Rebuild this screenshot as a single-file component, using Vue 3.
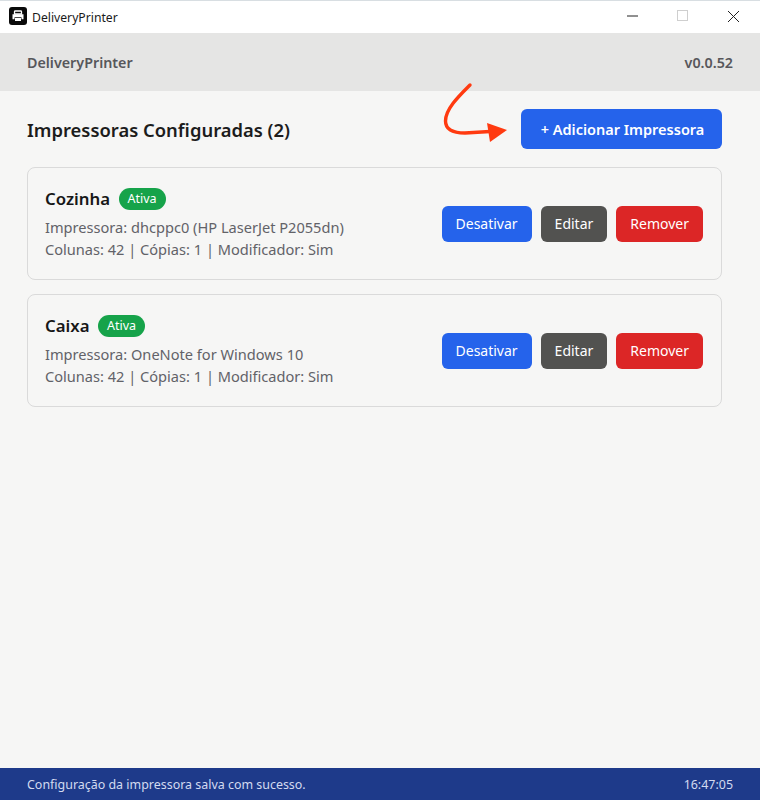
<script setup>
const printers = [
  { name: 'Cozinha', device: 'dhcppc0 (HP LaserJet P2055dn)' },
  { name: 'Caixa', device: 'OneNote for Windows 10' }
]
</script>

<template>
  <div class="window">
    <div class="titlebar">
      <div class="app-icon">
        <svg width="18" height="18" viewBox="0 0 18 18">
          <rect x="0" y="0" width="18" height="18" rx="3" fill="#0a0a0a" />
          <path d="M5.500 7V4.800q0-.8.8-.8h5.400q.8 0 .8.8V7z" fill="none" stroke="#fff" stroke-width="1.300" />
          <path d="M3.500 7.200h11v5h-2V10.300h-7v1.900h-2z" fill="#fff" />
          <path d="M6 11h6v3H6z" fill="#fff" />
        </svg>
      </div>
      <span class="app-title">DeliveryPrinter</span>
      <div class="controls">
        <svg width="12" height="12" viewBox="0 0 12 12"><path d="M0 6h11" stroke="#222" stroke-width="1" /></svg>
        <svg width="12" height="12" viewBox="0 0 12 12"><rect x="0.500" y="0.500" width="10" height="10" fill="none" stroke="#cfcfcf" /></svg>
        <svg width="13" height="13" viewBox="0 0 13 13"><path d="M1 1l11 11M12 1L1 12" stroke="#222" stroke-width="1" /></svg>
      </div>
    </div>
    <header class="header">
      <span>DeliveryPrinter</span>
      <span>v0.0.52</span>
    </header>
    <main class="main">
      <div class="section-head">
        <h2>Impressoras Configuradas (2)</h2>
        <div class="add-wrap">
          <svg class="arrow" width="70" height="66" viewBox="0 0 70 66">
            <path d="M27 3C16 14 2.500 27 2.500 39C2.500 48 10 51 22 51L47 49.500" fill="none" stroke="#ff3a10" stroke-width="3.400" stroke-linecap="round" />
            <path d="M44 41l20 7-17 12z" fill="#ff3a10" />
          </svg>
          <button class="btn-add">+ Adicionar Impressora</button>
        </div>
      </div>
      <div class="list">
        <article v-for="p in printers" :key="p.name" class="card">
          <div class="info">
            <div class="name-row">
              <span class="name">{{ p.name }}</span>
              <span class="badge">Ativa</span>
            </div>
            <div class="meta">Impressora: {{ p.device }}</div>
            <div class="meta">Colunas: 42 | Cópias: 1 | Modificador: Sim</div>
          </div>
          <div class="actions">
            <button class="btn blue">Desativar</button>
            <button class="btn gray">Editar</button>
            <button class="btn red">Remover</button>
          </div>
        </article>
      </div>
    </main>
    <footer class="footer">
      <span>Configuração da impressora salva com sucesso.</span>
      <span>16:47:05</span>
    </footer>
  </div>
</template>

<style>
html, body { margin: 0; background: #f6f6f5; }
</style>

<style scoped>
.window {
  width: 760px;
  height: 800px;
  display: flex;
  flex-direction: column;
  font-family: "Noto Sans", "Open Sans", sans-serif;
  background: #f6f6f5;
  overflow: hidden;
}
.titlebar {
  height: 33px;
  box-sizing: border-box;
  border-top: 1px solid #d8dee2;
  background: #fff;
  display: flex;
  align-items: center;
  padding-left: 9px;
  flex: none;
}
.app-icon { width: 18px; height: 18px; display: flex; margin-bottom: 2px; }
.app-title { margin-left: 5px; font-size: 12.200px; color: #1a1a1a; }
.controls {
  margin-left: auto;
  display: flex;
  align-items: center;
  gap: 38px;
  padding-right: 20px;
  padding-bottom: 2px;
}
.header {
  height: 58px;
  flex: none;
  background: #e5e5e4;
  display: flex;
  align-items: center;
  justify-content: space-between;
  padding: 0 27px;
  font-size: 14.300px;
  font-weight: 600;
  color: #57575b;
}
.main { flex: 1; padding: 18px 38px 0 27px; }
.section-head {
  display: flex;
  justify-content: space-between;
  align-items: center;
  height: 40px;
}
h2 { margin: 0; font-size: 18.400px; font-weight: 600; color: #1c1c1c; }
.add-wrap { position: relative; }
.arrow { position: absolute; left: -78px; top: -27px; }
.btn-add {
  width: 201px;
  height: 40px;
  border: none;
  border-radius: 6px;
  background: #2563eb;
  color: #fff;
  font: 600 14.500px "Noto Sans", sans-serif;
  padding: 0 0 0 2px;
}
.list { display: flex; flex-direction: column; gap: 14px; margin-top: 18px; }
.card {
  height: 113px;
  box-sizing: border-box;
  border: 1px solid #dadada;
  border-radius: 8px;
  padding: 0 18px 0 17px;
  display: flex;
  align-items: center;
  justify-content: space-between;
}
.name-row { display: flex; align-items: center; gap: 8.500px; margin-bottom: 6px; }
.name { font-size: 16.800px; font-weight: 600; color: #171717; }
.badge {
  background: #16a34a;
  color: #fff;
  font-size: 12.500px;
  line-height: 22px;
  padding: 0 9px;
  border-radius: 11px;
}
.meta { font-size: 14.600px; line-height: 22px; color: #626268; }
.actions { display: flex; gap: 9px; }
.btn {
  height: 36px;
  border: none;
  border-radius: 6px;
  color: #fff;
  font: 400 14px "Noto Sans", sans-serif;
  padding: 0 14px;
}
.blue { background: #2563eb; }
.gray { background: #525250; }
.red { background: #dc2626; }
.footer {
  height: 32px;
  flex: none;
  background: #1e3a8a;
  color: #d3daf0;
  display: flex;
  align-items: center;
  justify-content: space-between;
  padding: 0 27px 0 27px;
  font-size: 12.450px;
}
</style>
